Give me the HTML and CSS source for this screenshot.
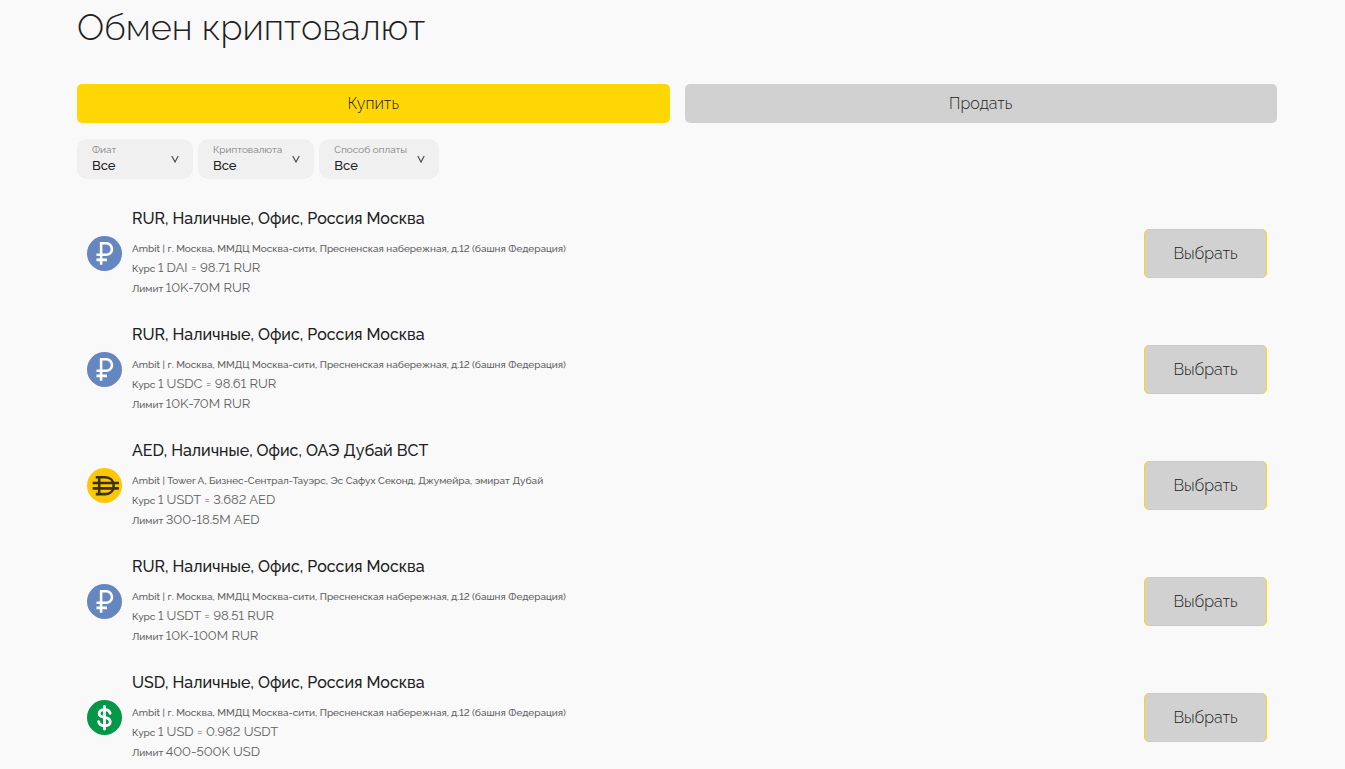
FILE: index.html
```html
<!DOCTYPE html>
<html lang="ru">
<head>
  <meta charset="UTF-8" />
  <meta name="viewport" content="width=device-width, initial-scale=1" />
  <title>Обмен криптовалют</title>
  <link rel="stylesheet" href="styles.css">
</head>
<body>
  <svg class="sprite" aria-hidden="true">
    <symbol id="rub" viewBox="0 0 34 34">
      <circle cx="17" cy="17" r="17" fill="#6686c0"/>
      <path d="M13.700 28V7.100h5a5.500 5.500 0 0 1 0 11.100H9.200M9.200 23.200h10.200" fill="none" stroke="#fff" stroke-width="2.500"/>
    </symbol>
    <symbol id="dai" viewBox="0 0 34 34">
      <circle cx="17" cy="17" r="17" fill="#fdc708"/>
      <path d="M8.500 9h9c5.200 0 8.400 3.300 8.400 8.200s-3.200 8.200-8.400 8.200h-9M11.800 9v16.400M5.500 14.500h25.500M5.500 19.800h25.500" fill="none" stroke="#3b310d" stroke-width="2.500"/>
    </symbol>
    <symbol id="usd" viewBox="0 0 34 34">
      <circle cx="17" cy="17" r="17" fill="#059748"/>
      <path d="M22.500 13c-.5-2.600-2.600-3.700-5.400-3.700-3.200 0-5.300 1.400-5.300 3.800 0 2.300 1.700 3.200 5.200 3.800 3.800.7 5.600 1.700 5.600 4.200s-2.300 3.900-5.500 3.900c-3.300 0-5.400-1.300-5.900-4M17 6.200v22" fill="none" stroke="#fff" stroke-width="2.700" stroke-linecap="round"/>
    </symbol>
    <symbol id="arrow" viewBox="0 0 8 8">
      <path d="M.8 1L4 7l3.200-6" fill="none" stroke="#444" stroke-width="1.100"/>
    </symbol>
  </svg>

  <main class="page">
    <h1>Обмен криптовалют</h1>

    <div class="tabs">
      <button type="button" class="tab active">Купить</button>
      <button type="button" class="tab">Продать</button>
    </div>

    <div class="filters">
      <div class="filter">
        <div class="filter-field">
          <label for="fiat">Фиат</label>
          <select id="fiat"><option>Все</option></select>
        </div>
        <svg class="arrow" aria-hidden="true"><use href="#arrow"/></svg>
      </div>
      <div class="filter">
        <div class="filter-field">
          <label for="crypto">Криптовалюта</label>
          <select id="crypto"><option>Все</option></select>
        </div>
        <svg class="arrow" aria-hidden="true"><use href="#arrow"/></svg>
      </div>
      <div class="filter">
        <div class="filter-field">
          <label for="payment">Способ оплаты</label>
          <select id="payment"><option>Все</option></select>
        </div>
        <svg class="arrow" aria-hidden="true"><use href="#arrow"/></svg>
      </div>
    </div>

    <div class="offers">
      <div class="offer">
        <svg class="coin" aria-hidden="true"><use href="#rub"/></svg>
        <div class="info">
          <h2>RUR, Наличные, Офис, Россия Москва</h2>
          <p>Ambit | г. Москва, ММДЦ Москва-сити, Пресненская набережная, д.12 (башня Федерация)</p>
          <p>Курс <span class="value">1 DAI = 98.71 RUR</span></p>
          <p>Лимит <span class="value">10K-70M RUR</span></p>
        </div>
        <button type="button" class="choose">Выбрать</button>
      </div>

      <div class="offer">
        <svg class="coin" aria-hidden="true"><use href="#rub"/></svg>
        <div class="info">
          <h2>RUR, Наличные, Офис, Россия Москва</h2>
          <p>Ambit | г. Москва, ММДЦ Москва-сити, Пресненская набережная, д.12 (башня Федерация)</p>
          <p>Курс <span class="value">1 USDC = 98.61 RUR</span></p>
          <p>Лимит <span class="value">10K-70M RUR</span></p>
        </div>
        <button type="button" class="choose">Выбрать</button>
      </div>

      <div class="offer">
        <svg class="coin" aria-hidden="true"><use href="#dai"/></svg>
        <div class="info">
          <h2>AED, Наличные, Офис, ОАЭ Дубай ВСТ</h2>
          <p>Ambit | Tower A, Бизнес-Сентрал-Тауэрс, Эс Сафух Секонд, Джумейра, эмират Дубай</p>
          <p>Курс <span class="value">1 USDT = 3.682 AED</span></p>
          <p>Лимит <span class="value">300-18.5M AED</span></p>
        </div>
        <button type="button" class="choose">Выбрать</button>
      </div>

      <div class="offer">
        <svg class="coin" aria-hidden="true"><use href="#rub"/></svg>
        <div class="info">
          <h2>RUR, Наличные, Офис, Россия Москва</h2>
          <p>Ambit | г. Москва, ММДЦ Москва-сити, Пресненская набережная, д.12 (башня Федерация)</p>
          <p>Курс <span class="value">1 USDT = 98.51 RUR</span></p>
          <p>Лимит <span class="value">10K-100M RUR</span></p>
        </div>
        <button type="button" class="choose">Выбрать</button>
      </div>

      <div class="offer">
        <svg class="coin" aria-hidden="true"><use href="#usd"/></svg>
        <div class="info">
          <h2>USD, Наличные, Офис, Россия Москва</h2>
          <p>Ambit | г. Москва, ММДЦ Москва-сити, Пресненская набережная, д.12 (башня Федерация)</p>
          <p>Курс <span class="value">1 USD = 0.982 USDT</span></p>
          <p>Лимит <span class="value">400-500K USD</span></p>
        </div>
        <button type="button" class="choose">Выбрать</button>
      </div>
    </div>
  </main>
</body>
</html>
```
FILE: styles.css
```css
* {
  box-sizing: border-box;
}
body {
  margin: 0;
  background: #f9f9f9;
  color: #212121;
  font-family: Raleway, Lato, "Open Sans", sans-serif;
  font-variant-numeric: lining-nums;
  overflow-x: hidden;
  scrollbar-width: none;
}
button, select {
  font-family: inherit;
  color: inherit;
}
.sprite {
  display: none;
}
.page {
  padding: 3px 68px 0 77px;
}
h1 {
  margin: 0 0 33px;
  font-size: 36px;
  line-height: 48px;
  font-weight: 300;
}
.tabs {
  display: flex;
  gap: 15px;
  margin-bottom: 16px;
}
.tab {
  flex: 1;
  height: 39px;
  padding: 0;
  border: 0;
  border-radius: 5px;
  background: #d1d1d1;
  font-size: 16px;
  font-weight: 300;
  cursor: pointer;
}
.tab.active {
  background: #ffd705;
}
.filters {
  display: flex;
  gap: 5px;
  margin-bottom: 16px;
}
.filter {
  display: flex;
  align-items: center;
  justify-content: space-between;
  min-width: 116px;
  height: 40px;
  padding: 0 14px 0 15px;
  border-radius: 10px;
  background: #f0f0f0;
}
.filter-field {
  display: flex;
  flex-direction: column;
}
.filter label {
  font-size: 10px;
  line-height: 14px;
  color: #808080;
}
.filter select {
  appearance: none;
  padding: 0;
  border: 0;
  background: none;
  font-size: 13px;
  line-height: 18px;
  font-weight: 500;
}
.arrow {
  width: 8px;
  height: 8px;
  margin-left: 10px;
}
.offer {
  display: flex;
  align-items: center;
  padding: 10px 10px 9px;
}
.coin {
  flex: none;
  width: 35px;
  height: 35px;
  margin-right: 10px;
}
.info {
  flex: 1;
  padding: 2px 0 3px;
}
.info h2 {
  margin: 0 0 8px;
  font-size: 16px;
  line-height: 24px;
  font-weight: 500;
}
.info p {
  margin: 0;
  font-size: 10px;
  line-height: 20px;
  font-weight: 500;
  color: #606060;
}
.info .value {
  font-size: 13px;
  line-height: 1;
  font-weight: 400;
}
.choose {
  width: 123px;
  height: 49px;
  padding: 0;
  border: 1px solid #ffd705;
  border-radius: 5px;
  background: #d1d1d1;
  font-size: 16px;
  font-weight: 300;
  cursor: pointer;
}
```
